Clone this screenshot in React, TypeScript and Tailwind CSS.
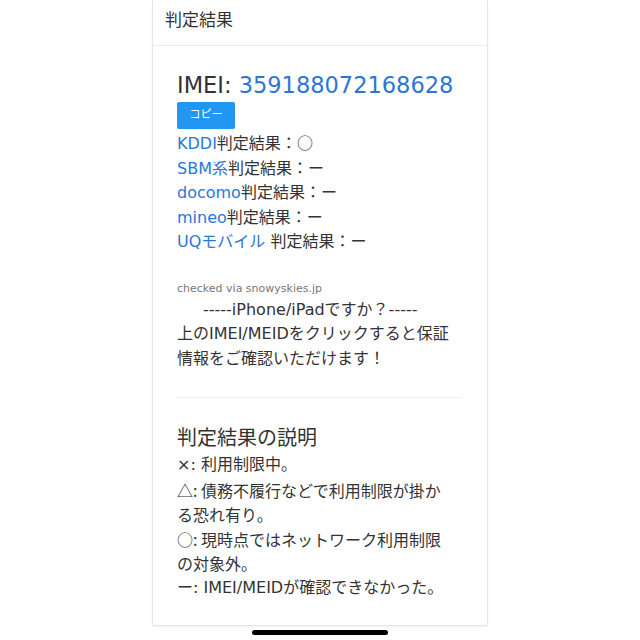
import {FC} from 'react';

const carriers = [
  {name: 'KDDI', result: '○'},
  {name: 'SBM系', result: 'ー'},
  {name: 'docomo', result: 'ー'},
  {name: 'mineo', result: 'ー'},
  {name: 'UQモバイル', result: 'ー', gap: true},
];

const legend = [
  {text: '×: 利用制限中。', cjk: false},
  {text: '△: 債務不履行などで利用制限が掛か\nる恐れ有り。', cjk: true},
  {text: '○: 現時点ではネットワーク利用制限\nの対象外。', cjk: true},
  {text: 'ー: IMEI/MEIDが確認できなかった。', cjk: false},
];

const App: FC = () => {
  return (
    <div
      className="relative w-[640px] h-[640px] bg-white overflow-hidden text-[#333]"
      style={{fontFamily: '"DejaVu Sans", "Noto Sans CJK JP", sans-serif'}}>
      <div className="ml-[152px] w-[336px] h-[626px] border border-t-0 border-[#e6e6e6] shadow-[0_1px_2px_rgba(0,0,0,0.05)] flex flex-col">
        {/* header */}
        <div className="h-[46px] border-b border-[#ececec] px-3 flex items-center text-[17px] pb-[4px]">
          判定結果
        </div>

        <div className="px-6 pt-[24px]">
          <div className="text-[22.5px] leading-[30px]">
            IMEI: <span className="text-[#2a77d6]">359188072168628</span>
          </div>
          <button className="mt-[2px] h-[27px] w-[58px] rounded-[2px] bg-[#2196f3] text-white text-[11px] flex items-center justify-center">
            コピー
          </button>

          <div className="mt-[3px] text-[16px] leading-[24.5px]">
            {carriers.map(c => (
              <div key={c.name} className="h-[24.5px]">
                <span className="text-[#2a77d6]">{c.name}</span>
                {c.gap ? ' ' : ''}判定結果：
                <span className="font-['Noto_Sans_CJK_JP',sans-serif] leading-[0]">{c.result}</span>
              </div>
            ))}
          </div>

          <div className="mt-[26px] text-[11px] text-[#777] leading-[16px]">checked via snowyskies.jp</div>
          <div className="text-[16px] leading-[24.5px] mt-[1px]">
            <div className="pl-[26px]">-----iPhone/iPadですか？-----</div>
            <div>上のIMEI/MEIDをクリックすると保証</div>
            <div>情報をご確認いただけます！</div>
          </div>

          <div className="mt-[26px] mr-[2px] border-t border-[#efefef]" />

          <div className="mt-[27px] text-[20px] leading-[26px]">判定結果の説明</div>
          <div className="mt-[2px] text-[16px] leading-[24.5px]">
            {legend.map(l => (
              <div
                key={l.text}
                className={
                  l.cjk
                    ? "whitespace-pre-line font-['Noto_Sans_CJK_JP',sans-serif]"
                    : 'whitespace-pre-line'
                }>
                {l.text}
              </div>
            ))}
          </div>
        </div>
      </div>

      {/* home indicator */}
      <div className="absolute left-[252px] top-[630px] w-[136px] h-[5px] rounded-full bg-black" />
    </div>
  );
};

export default App;
